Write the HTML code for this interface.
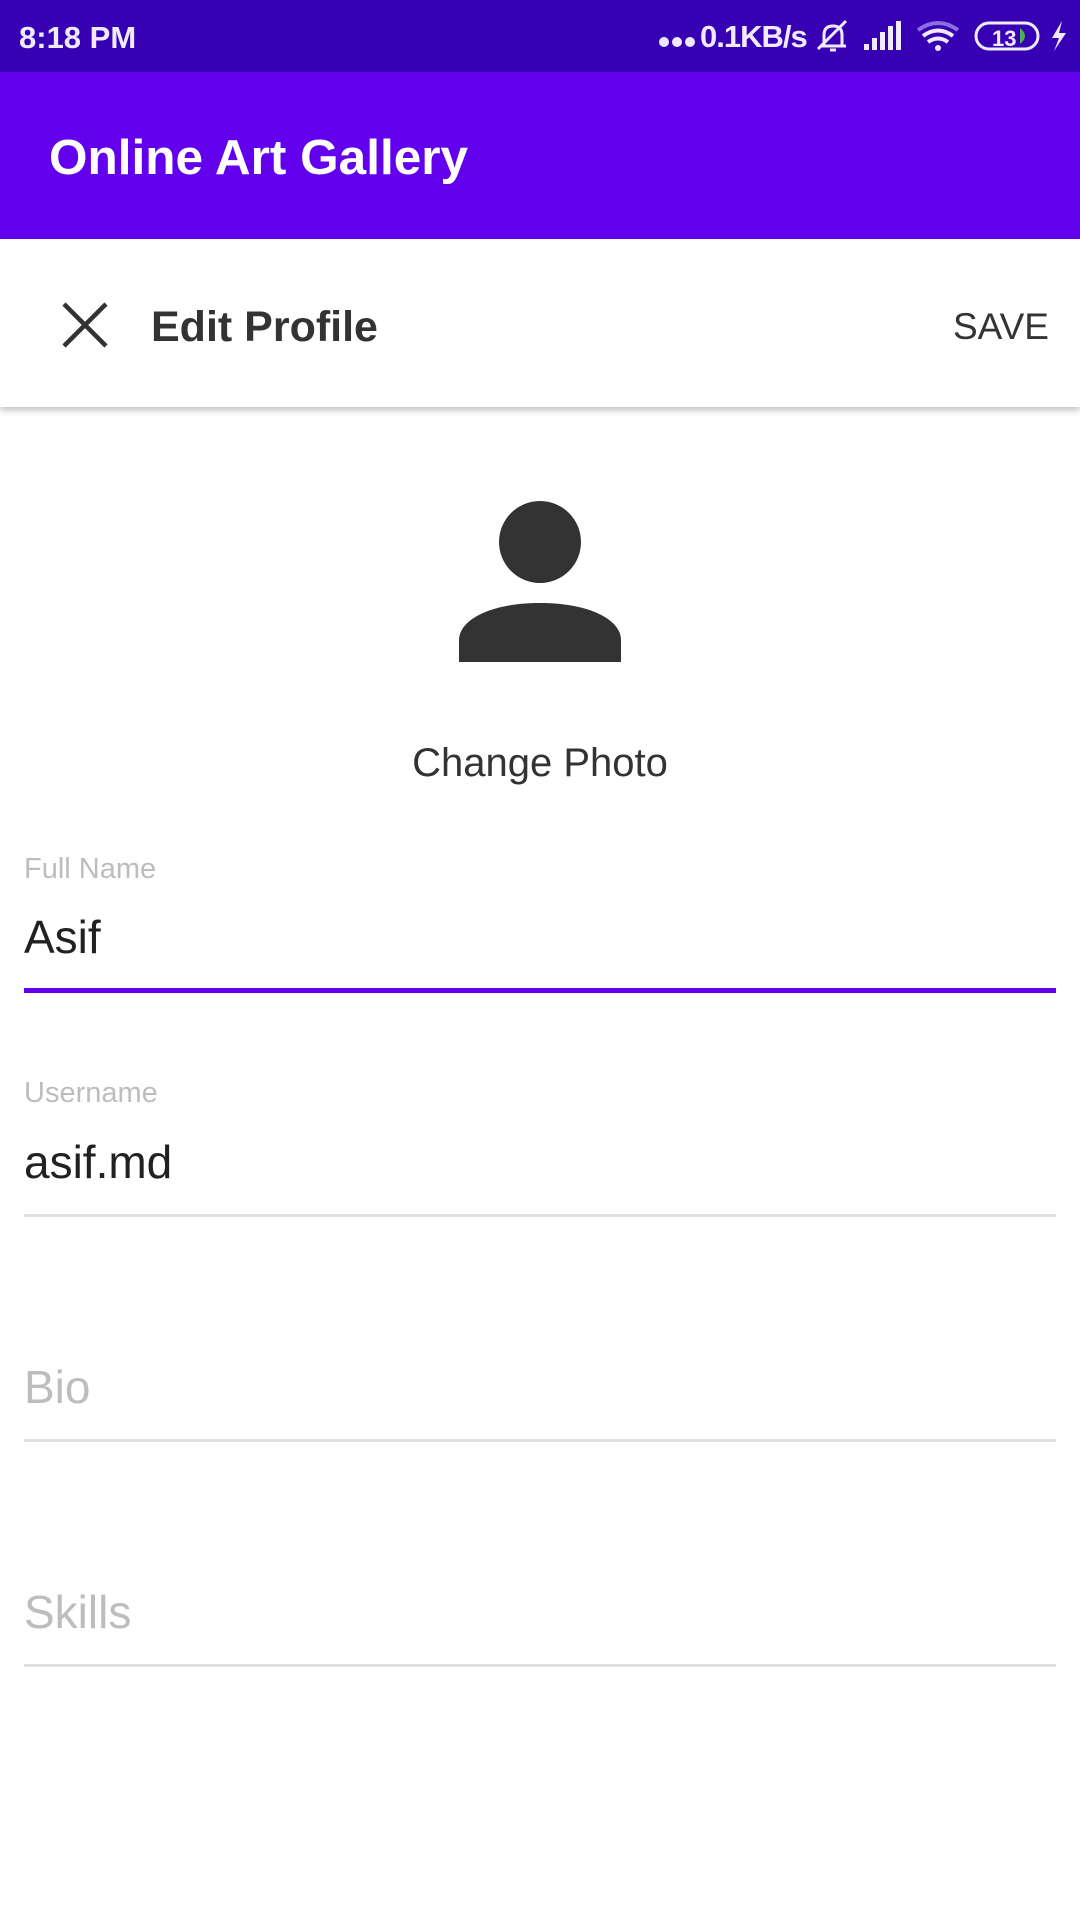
<!DOCTYPE html>
<html><head><meta charset="utf-8"><style>
*{margin:0;padding:0;box-sizing:border-box}
body{width:1080px;height:1920px;background:#fff;position:relative;overflow:hidden;font-family:"Liberation Sans",sans-serif}
.t{position:absolute;line-height:1;white-space:nowrap}
.line{position:absolute;left:24px;width:1032px;height:3px;background:#e0e0e0}
</style></head><body>
<div style="position:absolute;left:0;top:0;width:1080px;height:72px;background:#3700b3"></div>
<div class="t" style="left:19px;top:22px;font-size:31px;font-weight:bold;color:#f0eaff">8:18 PM</div>
<svg style="position:absolute;left:658px;top:36px" width="40" height="12"><circle cx="6" cy="6" r="5" fill="#f0eaff"/><circle cx="19" cy="6" r="5" fill="#f0eaff"/><circle cx="32" cy="6" r="5" fill="#f0eaff"/></svg>
<div class="t" style="left:700px;top:21px;font-size:31px;font-weight:bold;color:#f0eaff;letter-spacing:-1px">0.1KB/s</div>
<svg style="position:absolute;left:810px;top:18px" width="260" height="36" viewBox="0 0 260 36">
 <g fill="none" stroke="#f0eaff" stroke-width="3">
  <path d="M14 28 V17 Q14 8 23 8 Q32 8 32 17 V28 H10 H36"/>
  <path d="M8 31 L36 3"/>
  <path d="M20 32 H26"/>
 </g>
 <g fill="#f0eaff">
  <rect x="54" y="26" width="5" height="6"/><rect x="62" y="20" width="5" height="12"/><rect x="70" y="14" width="5" height="18"/><rect x="78" y="8" width="5" height="24"/><rect x="86" y="3" width="5" height="29"/>
 </g>
 <path d="M108 12 Q128 -2 148 12" stroke="#8a70e0" stroke-width="4" fill="none"/>
 <path d="M113 18 Q128 7 143 18" stroke="#f0eaff" stroke-width="4" fill="none"/>
 <path d="M118 24 Q128 17 138 24" stroke="#f0eaff" stroke-width="4" fill="none"/>
 <circle cx="128" cy="30" r="3" fill="#f0eaff"/>
 <rect x="166" y="5" width="62" height="26" rx="13" fill="none" stroke="#f0eaff" stroke-width="3"/>
 <text x="182" y="28" font-family="Liberation Sans" font-weight="bold" font-size="22" fill="#f0eaff">13</text>
 <path d="M210 10 Q220 18 210 26 Z" fill="#4caf50"/>
 <path d="M252 3 L242 20 H249 L244 33 L256 15 H249 Z" fill="#f0eaff"/>
</svg>
<div style="position:absolute;left:0;top:72px;width:1080px;height:167px;background:#6200ee"></div>
<div class="t" style="left:49px;top:133px;font-size:49.5px;font-weight:bold;color:#fff">Online Art Gallery</div>
<div style="position:absolute;left:0;top:239px;width:1080px;height:168px;background:#fff;box-shadow:0 4px 6px rgba(0,0,0,0.22)"></div>
<svg style="position:absolute;left:60px;top:300px" width="50" height="50" viewBox="0 0 50 50"><path d="M4 4 L46 46 M46 4 L4 46" stroke="#333" stroke-width="4.5"/></svg>
<div class="t" style="left:151px;top:306px;font-size:43px;font-weight:bold;color:#333">Edit Profile</div>
<div class="t" style="left:953px;top:308px;font-size:37px;color:#333">SAVE</div>
<svg style="position:absolute;left:0;top:490px" width="1080" height="180"><circle cx="540" cy="52" r="41" fill="#333"/><path d="M459 172 V150 C459 130 490 113 540 113 C590 113 621 130 621 150 V172 Z" fill="#333"/></svg>
<div class="t" style="left:0;width:1080px;text-align:center;top:743px;font-size:40px;color:#333">Change Photo</div>
<div class="t" style="left:24px;top:855px;font-size:29px;color:#bdbdbd">Full Name</div>
<div class="t" style="left:24px;top:914px;font-size:46px;color:#212121">Asif</div>
<div style="position:absolute;left:24px;top:988px;width:1032px;height:5px;background:#6200ee"></div>
<div class="t" style="left:24px;top:1079px;font-size:29px;color:#bdbdbd">Username</div>
<div class="t" style="left:24px;top:1139px;font-size:46px;color:#212121">asif.md</div>
<div class="line" style="top:1214px"></div>
<div class="t" style="left:24px;top:1364px;font-size:46px;color:#bdbdbd">Bio</div>
<div class="line" style="top:1439px"></div>
<div class="t" style="left:24px;top:1589px;font-size:46px;color:#bdbdbd">Skills</div>
<div class="line" style="top:1664px"></div>
</body></html>
